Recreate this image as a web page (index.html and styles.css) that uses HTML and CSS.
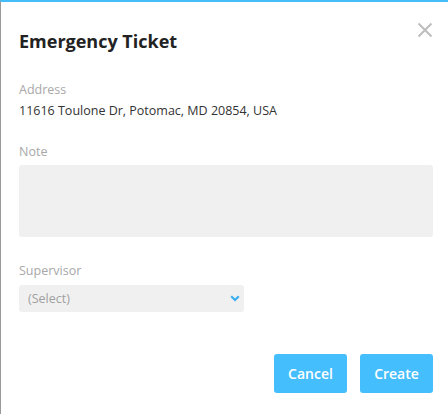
FILE: index.html
```html
<!DOCTYPE html>
<html>
<head>
<meta charset="utf-8">
<link rel="stylesheet" href="styles.css">
</head>
<body>
<div class="dialog">
  <div class="header">
    <h1 class="title">Emergency Ticket</h1>
    <button class="close" aria-label="Close">
      <svg width="16" height="16" viewBox="0 0 16 16"><path d="M1.5 1.5L14.5 14.5M14.5 1.5L1.5 14.5" stroke="#bdbdbd" stroke-width="2" fill="none"/></svg>
    </button>
  </div>
  <div class="field field-address">
    <div class="label">Address</div>
    <div class="value">11616 Toulone Dr, Potomac, MD 20854, USA</div>
  </div>
  <div class="field field-note">
    <div class="label">Note</div>
    <div class="textarea"></div>
  </div>
  <div class="field field-super">
    <div class="label">Supervisor</div>
    <div class="select">
      <span class="placeholder">(Select)</span>
      <svg class="chev" width="10" height="7" viewBox="0 0 10 7"><path d="M1.2 1.2L5 5L8.8 1.2" stroke="#3aaef0" stroke-width="2.2" fill="none"/></svg>
    </div>
  </div>
  <div class="actions">
    <button class="btn">Cancel</button>
    <button class="btn">Create</button>
  </div>
</div>
</body>
</html>
```
FILE: styles.css
```css
html, body {
  margin: 0;
  padding: 0;
  background: #fff;
}
body {
  font-family: "Open Sans", "Noto Sans", sans-serif;
  width: 448px;
  height: 414px;
  overflow: hidden;
}
.dialog {
  box-sizing: border-box;
  width: 448px;
  height: 414px;
  border-left: 1px solid #9a9a9a;
  border-top: 2px solid #44bdfb;
  padding: 27px 15px 0 18px;
  display: flex;
  flex-direction: column;
}
.header {
  display: flex;
  justify-content: space-between;
  align-items: flex-start;
}
.title {
  margin: 0;
  font-size: 18px;
  line-height: 24px;
  font-weight: 700;
  color: #222;
}
.close {
  border: 0;
  background: none;
  padding: 0;
  margin-top: -7px;
  margin-right: 0;
  width: 16px;
  height: 16px;
  display: flex;
}
.field {
  display: flex;
  flex-direction: column;
}
.field-address { margin-top: 28px; }
.field-note { margin-top: 23px; }
.field-super { margin-top: 25px; }
.label {
  font-size: 12.5px;
  line-height: 18px;
  color: #a8a8a8;
}
.value {
  margin-top: 3px;
  font-size: 12.5px;
  line-height: 18px;
  color: #333;
}
.textarea {
  margin-top: 4px;
  height: 72px;
  background: #f0f0f0;
  border-radius: 3px;
}
.select {
  margin-top: 5px;
  width: 225px;
  height: 27px;
  background: #f0f0f0;
  border-radius: 3px;
  display: flex;
  align-items: center;
  justify-content: space-between;
  padding: 0 4px 0 9px;
  box-sizing: border-box;
}
.placeholder {
  font-size: 12.5px;
  color: #a0a0a0;
}
.chev {
  margin-right: 0;
}
.actions {
  margin-top: 42px;
  display: flex;
  justify-content: flex-end;
  gap: 13px;
}
.btn {
  font-family: "Open Sans", "Noto Sans", sans-serif;
  font-size: 14px;
  font-weight: 600;
  color: #fff;
  background: #45befe;
  border: 0;
  border-radius: 3px;
  height: 39px;
  width: 73px;
  padding: 0;
}
```
